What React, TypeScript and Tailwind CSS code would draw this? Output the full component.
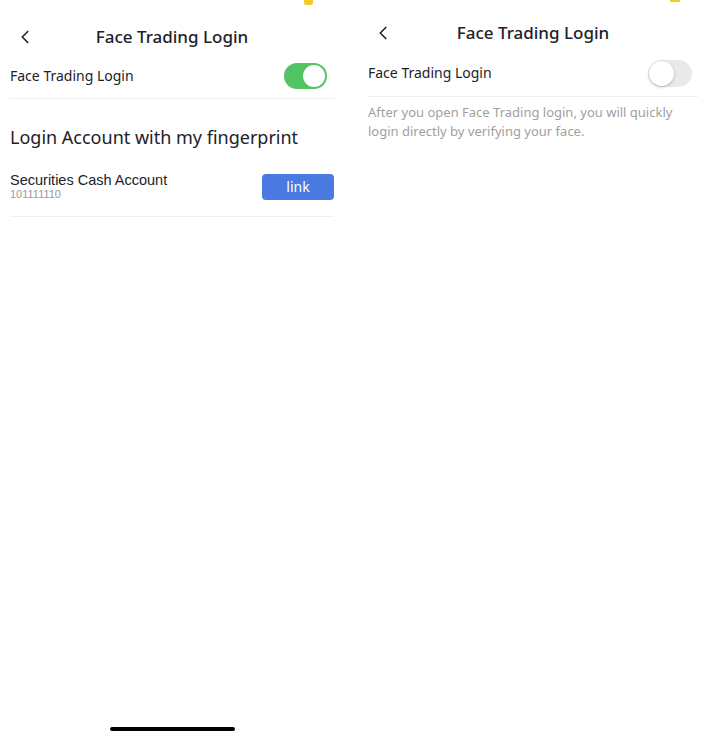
import { ChevronLeft } from "lucide-react";

function Header({ title }: { title: string }) {
  return (
    <div className="relative flex h-[30px] items-center justify-center">
      <ChevronLeft className="absolute left-[4px] h-[22px] w-[22px] text-[#222]" strokeWidth={1.8} />
      <span className="text-[17px] font-medium leading-[30px] text-[#1d2129]">{title}</span>
    </div>
  );
}

function Toggle({ on }: { on: boolean }) {
  return on ? (
    <div className="flex h-[26px] w-[43px] items-center justify-end rounded-full bg-[#52c463] px-[2px]">
      <div className="h-[22px] w-[22px] rounded-full bg-white" />
    </div>
  ) : (
    <div className="flex h-[27px] w-[44px] items-center rounded-full bg-[#e9e9ea] px-[1px]">
      <div className="h-[25px] w-[25px] rounded-full bg-white shadow-[0_1px_3px_rgba(0,0,0,0.25)]" />
    </div>
  );
}

export default function App() {
  return (
    <div
      className="relative h-[734px] w-[708px] overflow-hidden bg-white text-[#1d2129]"
      style={{ fontFamily: "'Noto Sans', 'Liberation Sans', sans-serif" }}
    >
      <div className="absolute left-[304px] top-0 h-[5px] w-[9px] rounded-b-[2px] bg-[#f5c928]" />
      <div className="absolute left-[670px] top-0 h-[2px] w-[10px] bg-[#f5c928]" />

      <div className="flex">
        <div className="w-[344px] px-[10px] pt-[22px]">
          <Header title="Face Trading Login" />
          <div className="mt-[9px] flex h-[30px] items-center justify-between pr-[7px]">
            <span className="text-[14px] leading-[20px]">Face Trading Login</span>
            <Toggle on />
          </div>
          <div className="mt-[7px] h-px bg-[#efefef]" />
          <div className="mt-[26px] text-[18px] leading-[24px]">Login Account with my fingerprint</div>
          <div className="mt-[23px] flex items-center justify-between">
            <div className="flex flex-col font-['Liberation_Sans',sans-serif]">
              <span className="text-[14.5px] leading-[16px]">Securities Cash Account</span>
              <span className="text-[11px] leading-[13px] text-[#9a9a9a]">101111110</span>
            </div>
            <button className="flex h-[26px] w-[72px] items-center justify-center rounded-[4px] bg-[#4a79e1] text-[14px] text-white">
              link
            </button>
          </div>
          <div className="mt-[15px] h-px bg-[#efefef]" />
        </div>

        <div className="ml-[14px] w-[350px] px-[10px] pt-[18px]">
          <Header title="Face Trading Login" />
          <div className="mt-[10px] flex h-[30px] items-center justify-between pr-[6px]">
            <span className="text-[14px] leading-[20px]">Face Trading Login</span>
            <Toggle on={false} />
          </div>
          <div className="mt-[8px] h-px bg-[#efefef]" />
          <p className="mt-[6px] text-[13px] leading-[19px] text-[#a0a0a0]">
            After you open Face Trading login, you will quickly login directly by verifying your face.
          </p>
        </div>
      </div>

      <div className="absolute left-[110px] top-[727px] h-[4px] w-[125px] rounded-full bg-black" />
    </div>
  );
}
